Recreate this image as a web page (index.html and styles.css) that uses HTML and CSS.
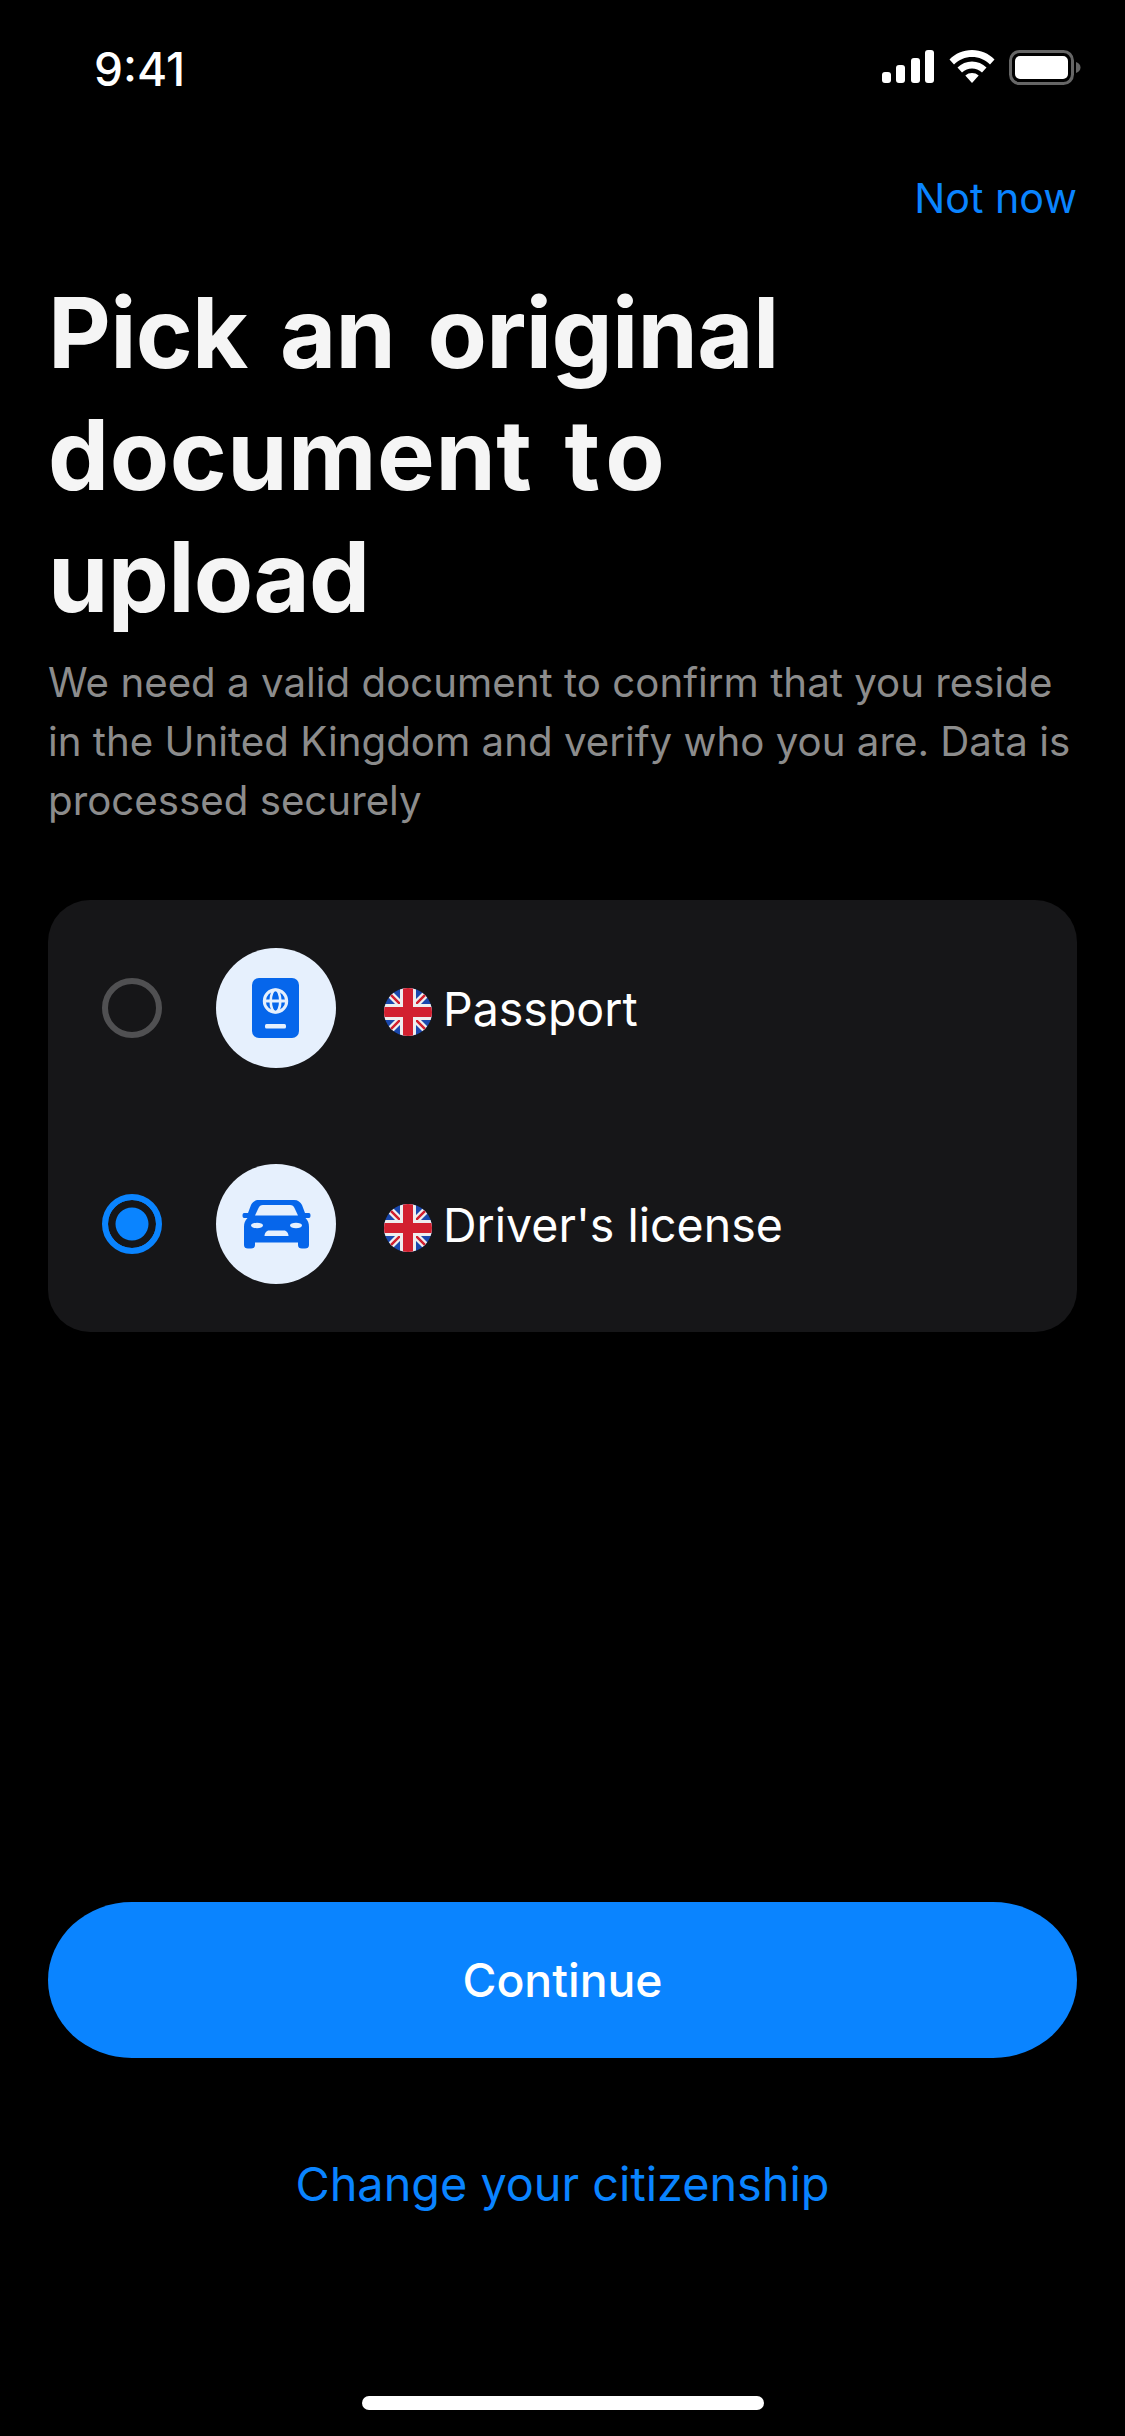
FILE: index.html
```html
<!DOCTYPE html>
<html lang="en">
<head>
<meta charset="utf-8">
<title>Pick an original document</title>
<link rel="stylesheet" href="styles.css">
</head>
<body>
<div class="screen">
  <div class="status">
    <span class="time">9:41</span>
    <div class="status-icons">
      <svg width="54" height="33" viewBox="0 0 54 33"><rect x="1" y="22" width="9" height="11" rx="3" fill="#fff"/><rect x="15" y="15" width="9" height="18" rx="3" fill="#fff"/><rect x="30" y="8" width="9" height="25" rx="3" fill="#fff"/><rect x="44" y="0" width="9" height="33" rx="3" fill="#fff"/></svg>
      <svg width="46" height="33" viewBox="0 0 46 33"><path d="M23 0C14 0 6.500 3.500 0.500 9.500L5 14.500C10 9.500 16 7 23 7S36 9.500 41 14.500L45.500 9.500C39.500 3.500 32 0 23 0Z" fill="#fff"/><path d="M23 11.500C17.500 11.500 12.500 13.500 8.500 17.500L13 22.500C16 19.800 19.300 18.500 23 18.500S30 19.800 33 22.500L37.500 17.500C33.500 13.500 28.500 11.500 23 11.500Z" fill="#fff"/><path d="M23 23C20.500 23 18.200 23.800 16.300 25.500L23 33L29.700 25.500C27.800 23.800 25.500 23 23 23Z" fill="#fff"/></svg>
      <svg width="72" height="35" viewBox="0 0 72 35"><rect x="1.500" y="1.500" width="62" height="32" rx="9" fill="none" stroke="#666" stroke-width="3"/><rect x="6" y="6" width="53" height="23" rx="5" fill="#fff"/><path d="M67 12C70 13 71.500 15 71.500 17.500S70 22 67 23Z" fill="#666"/></svg>
    </div>
  </div>

  <div class="top-action"><a class="link">Not now</a></div>

  <h1 class="title">Pick an original <span class="doc">document</span> <span class="to">to</span> upload</h1>
  <p class="lead">We need a valid document to confirm that you reside in the United Kingdom and verify who you are. Data is processed securely</p>

  <div class="card">
    <div class="row">
      <span class="radio"></span>
      <span class="badge">
        <svg width="48" height="60" viewBox="0 0 48 60"><rect width="47" height="60" rx="7" fill="#0666eb"/><circle cx="23.500" cy="23" r="11.200" fill="none" stroke="#e6f0fd" stroke-width="3"/><ellipse cx="23.500" cy="23" rx="4.800" ry="11.200" fill="none" stroke="#e6f0fd" stroke-width="2.600"/><path d="M12 23H35" stroke="#e6f0fd" stroke-width="3"/><rect x="13" y="46" width="21" height="4.500" rx="1.500" fill="#e6f0fd"/></svg>
      </span>
      <span class="label">
        <svg class="flag" width="48" height="48" viewBox="0 0 48 48"><use href="#uk"/></svg>
        <span class="label-text">Passport</span>
      </span>
    </div>
    <div class="row">
      <span class="radio on"></span>
      <span class="badge">
        <svg width="69" height="49" viewBox="0 0 69 49"><path fill="#0666eb" d="M17 0H52C56 0 58.500 2 60 5L63 13H67C69 13 69 18 67 18H63.500C66 20.500 67 23 67 27V45C67 47.500 65.500 48.500 63 48.500H60C57.500 48.500 56 47.500 56 45V42.500H13V45C13 47.500 11.500 48.500 9 48.500H6C3.500 48.500 2 47.500 2 45V27C2 23 3 20.500 5.500 18H2C0 18 0 13 2 13H6L9 5C10.500 2 13 0 17 0Z"/><path fill="#e6f0fd" d="M21 5H48C50.500 5 51.500 6 52.500 8L56 15.500H13L16.500 8C17.500 6 18.500 5 21 5Z"/><ellipse cx="15" cy="25.500" rx="6" ry="2.700" fill="#e6f0fd"/><ellipse cx="54" cy="25.500" rx="6" ry="2.700" fill="#e6f0fd"/><path fill="#e6f0fd" d="M27 30.500H42C44.500 30.500 46.500 33 46.500 36H22.500C22.500 33 24.500 30.500 27 30.500Z"/></svg>
      </span>
      <span class="label">
        <svg class="flag" width="48" height="48" viewBox="0 0 48 48"><use href="#uk"/></svg>
        <span class="label-text">Driver's license</span>
      </span>
    </div>
  </div>

  <div class="spacer"></div>

  <div class="button">Continue</div>
  <div class="bottom-link"><a class="link">Change your citizenship</a></div>
  <div class="home-row"><span class="home"></span></div>
</div>

<svg class="defs" width="0" height="0">
  <defs>
    <clipPath id="round"><circle cx="24" cy="24" r="24"/></clipPath>
    <g id="uk" clip-path="url(#round)">
      <rect width="48" height="48" fill="#1a48ad"/>
      <path d="M0 0L48 48M48 0L0 48" stroke="#eee" stroke-width="7"/>
      <path d="M0 0L48 48M48 0L0 48" stroke="#d2202f" stroke-width="2.500"/>
      <rect x="16" width="16" height="48" fill="#eee"/>
      <rect y="16" width="48" height="16" fill="#eee"/>
      <rect x="19" width="10" height="48" fill="#d2202f"/>
      <rect y="19" width="48" height="10" fill="#d2202f"/>
    </g>
  </defs>
</svg>
</body>
</html>
```

FILE: styles.css
```css
* { box-sizing: border-box; }
html, body { margin: 0; padding: 0; background: #000; }
body { font-family: Inter, "Liberation Sans", sans-serif; }

.screen {
  width: 1125px;
  height: 2436px;
  display: flex;
  flex-direction: column;
  padding: 0 48px;
  color: #fff;
  background: #000;
}

.status {
  height: 136px;
  flex: none;
  display: flex;
  justify-content: space-between;
  align-items: flex-start;
  padding: 47px 0 0 46px;
  margin-right: -4px;
}
.time { font-size: 46px; line-height: 44px; font-weight: 500; letter-spacing: 0; }
.status-icons { display: flex; align-items: flex-start; gap: 14px; padding-top: 22px; margin-top: -19px; }

.top-action { display: flex; justify-content: flex-end; height: 92px; align-items: center; flex: none; margin-top: 16px; margin-bottom: 28px; }
.link { color: #0a84ff; font-size: 41.2px; line-height: 56px; }

.title {
  margin: 0;
  font-size: 97px;
  line-height: 122px;
  font-weight: 700;
  letter-spacing: -0.700px;
  word-spacing: 10px;
  color: #f5f5f5;
  max-width: 860px;
  flex: none;
}
.title .doc { letter-spacing: 0.500px; }
.title .to { letter-spacing: 6px; }
.lead {
  margin: 15px 0 0;
  font-size: 40.250px;
  line-height: 59px;
  color: #8c8c8c;
  flex: none;
}

.card {
  margin-top: 70px;
  background: #161618;
  border-radius: 42px;
  padding: 48px 54px;
  display: flex;
  flex-direction: column;
  gap: 96px;
  flex: none;
}
.row { display: flex; align-items: center; height: 120px; }
.radio {
  width: 60px; height: 60px; border-radius: 50%;
  border: 6px solid #505052;
  flex: none;
}
.radio.on {
  border-color: #0a84ff;
  background: #0a84ff;
  box-shadow: inset 0 0 0 7.500px #161618;
}
.badge {
  width: 120px; height: 120px; border-radius: 50%;
  background: #e6f0fd;
  margin-left: 54px;
  display: flex; align-items: center; justify-content: center;
  flex: none;
}
.label {
  margin-left: 48px;
  display: flex; align-items: center; gap: 11px;
  font-size: 46.500px;
  font-weight: 400;
}
.label-text { padding-top: 2px; }
.flag { flex: none; margin-top: 8px; }

.spacer { flex: 1; }

.button {
  height: 156px;
  border-radius: 84px / 78px;
  background: #0a84ff;
  display: flex; align-items: center; justify-content: center;
  font-size: 46.300px;
  font-weight: 500;
  flex: none;
}
.bottom-link { text-align: center; margin-top: 98px; flex: none; }
.bottom-link .link { font-size: 46.800px; }
.home-row { display: flex; justify-content: center; margin-top: 184px; height: 32px; flex: none; margin-bottom: 8px; }
.home { width: 402px; height: 14px; border-radius: 7px; background: #fff; }
.defs { position: absolute; }
```
